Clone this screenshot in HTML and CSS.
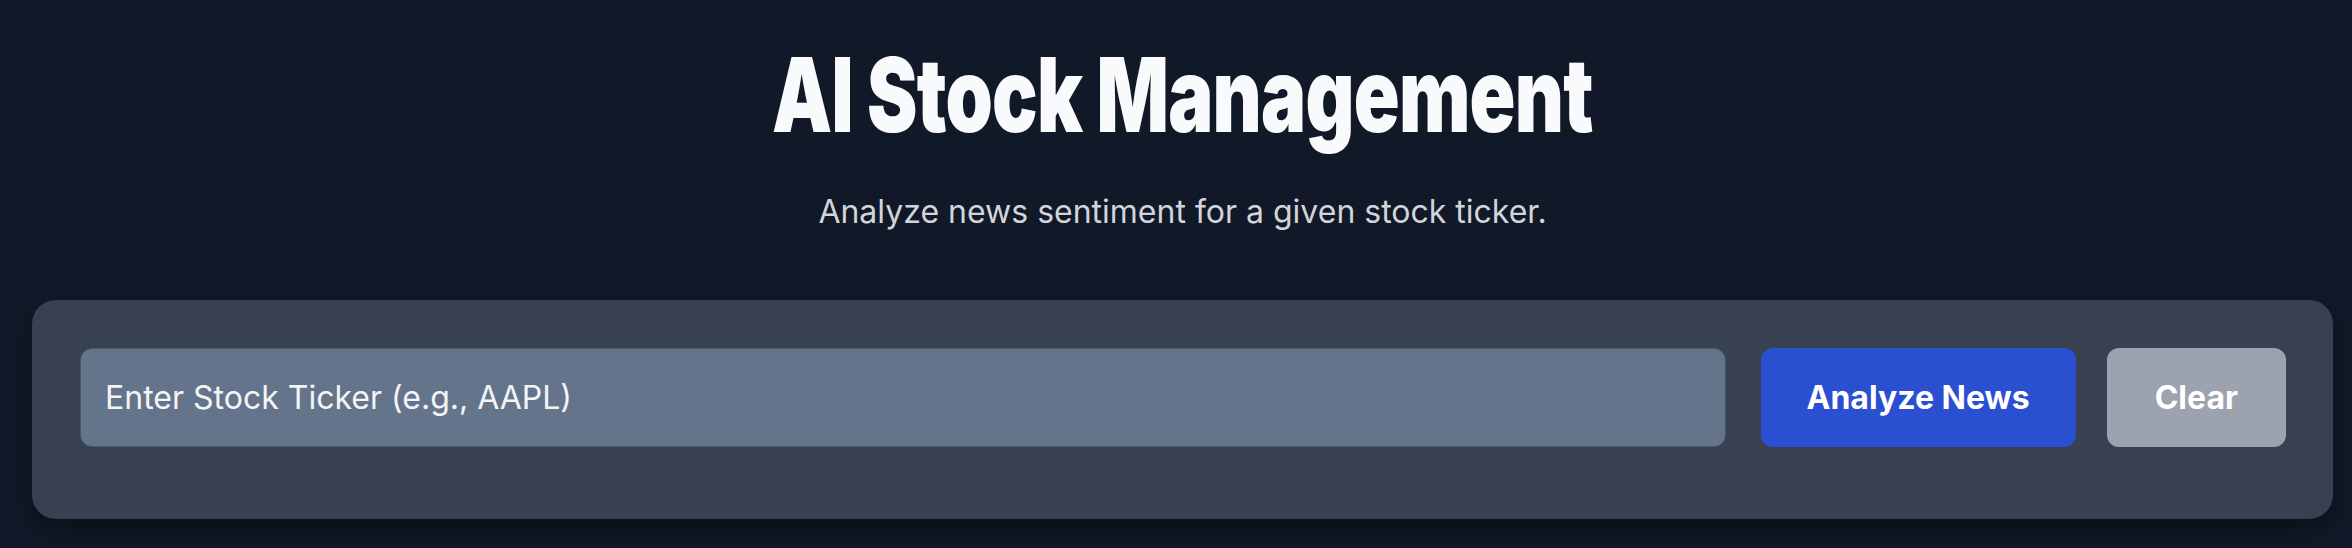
FILE: index.html
```html
<!DOCTYPE html>
<html lang="en">
<head>
<meta charset="utf-8">
<title>AI Stock Management</title>
<link rel="stylesheet" href="styles.css">
</head>
<body>
<div class="page">
  <header class="header">
    <h1 class="title"><span class="title-text">AI Stock Management</span></h1>
    <p class="subtitle">Analyze news sentiment for a given stock ticker.</p>
  </header>
  <section class="panel">
    <div class="row">
      <input class="ticker" type="text" placeholder="Enter Stock Ticker (e.g., AAPL)">
      <button class="btn btn-primary" type="button">Analyze News</button>
      <button class="btn btn-clear" type="button">Clear</button>
    </div>
  </section>
</div>
</body>
</html>
```
FILE: styles.css
```css
* { box-sizing: border-box; }
html, body { margin: 0; padding: 0; }
body {
  background: #111827;
  font-family: Inter, "Noto Sans", "Liberation Sans", sans-serif;
  color: #f9fafb;
  width: 2352px;
  height: 548px;
  overflow: hidden;
}
.page {
  padding: 0 19px 0 32px;
}
.header {
  text-align: center;
}
.title {
  margin: 0;
  padding-top: 43px;
  font-size: 103px;
  line-height: 1;
  font-weight: 900;
  letter-spacing: -1px;
  color: #f9fafb;
}
.title-text {
  display: inline-block;
  transform: scaleX(0.735);
  transform-origin: center;
}
.subtitle {
  margin: 43px 0 0;
  font-size: 32px;
  line-height: 45px;
  color: #d1d5db;
}
.panel {
  margin-top: 66px;
  background: #374151;
  border-radius: 24px;
  padding: 48px 47px 48px 48px;
  box-shadow: 0 10px 22px rgba(0, 0, 0, 0.35);
}
.row {
  display: flex;
  align-items: stretch;
  margin-bottom: 24px;
}
.ticker {
  flex: 1;
  min-width: 0;
  height: 99px;
  background: #64748b;
  border: 1.5px solid #4b5563;
  border-radius: 12px;
  padding: 0 24px;
  font-family: inherit;
  font-size: 32px;
  color: #ffffff;
  outline: none;
}
.ticker::placeholder {
  color: #f3f4f6;
  opacity: 1;
}
.btn {
  border: none;
  border-radius: 12px;
  padding: 0 48px;
  font-family: inherit;
  font-size: 32px;
  font-weight: 700;
  color: #ffffff;
  cursor: pointer;
}
.btn-primary {
  background: #2a4fd0;
  padding: 0 46px;
  margin-left: 35px;
}
.btn-clear {
  background: #9ca3af;
  margin-left: 31px;
}
```
